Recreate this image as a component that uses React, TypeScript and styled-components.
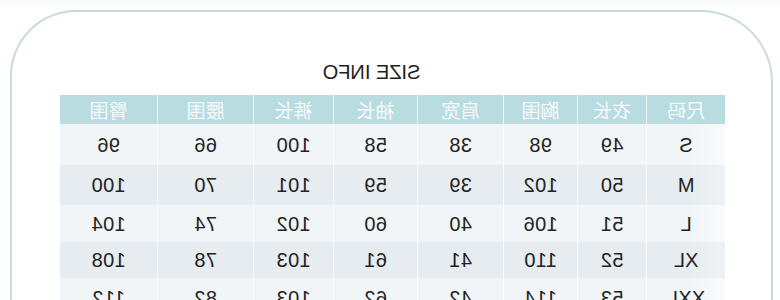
import React from "react";
import styled, { createGlobalStyle } from "styled-components";

const GlobalStyle = createGlobalStyle`
  html, body {
    margin: 0;
    padding: 0;
    background: #ffffff;
    overflow: hidden;
  }
`;

// the reference shot is mirrored left-to-right, so the whole page is flipped
const Page = styled.div`
  width: 780px;
  height: 300px;
  overflow: hidden;
  transform: scaleX(-1);
  background: linear-gradient(to bottom, #f7fafa 0, #ffffff 9px);
  padding-top: 10px;
  box-sizing: border-box;
`;

const Card = styled.div`
  margin-left: 7px;
  width: 763px;
  height: 420px;
  box-sizing: border-box;
  border: 2px solid #c4dddb;
  border-bottom: none;
  border-right-color: #c9dcdb;
  border-left-color: #cfdada;
  border-radius: 72px 66px 0 0;
  background: #ffffff;
  padding-top: 48px;
`;

const Title = styled.h2`
  margin: 0 0 11px;
  padding-left: 40px;
  text-align: center;
  font-family: "Liberation Sans", Arial, sans-serif;
  font-size: 20px;
  font-weight: 400;
  line-height: 24px;
  color: #1e1e1e;
`;

const Table = styled.div`
  margin-left: 46px;
  width: 665px;
  display: grid;
  grid-template-columns: 78px 69px 74px 86px 84px 80px 96px 98px;
`;

const HeadCell = styled.div`
  height: 29px;
  display: flex;
  align-items: center;
  justify-content: center;
  background: #b9dce1;
  border-left: 1px solid rgba(255, 255, 255, 0.75);
  font-family: "Noto Sans CJK SC", "Noto Sans", sans-serif;
  font-size: 19px;
  font-weight: 400;
  color: rgba(255, 255, 255, 0.88);
  &:first-child {
    border-left: none;
  }
`;

const Cell = styled.div<{ $h: number; $shade: boolean; $first: boolean }>`
  height: ${(p) => p.$h}px;
  display: flex;
  align-items: center;
  justify-content: center;
  box-sizing: border-box;
  background: ${(p) =>
    p.$first
      ? p.$shade
        ? "linear-gradient(to right, #eef2f4 0, #e6ecef 40px)"
        : "linear-gradient(to right, #f8fafb 0, #f2f5f8 40px)"
      : p.$shade
      ? "#e6ecef"
      : "#f2f5f8"};
  border-left: ${(p) => (p.$first ? "none" : "1px solid rgba(255,255,255,0.8)")};
  font-family: "Liberation Sans", Arial, sans-serif;
  font-size: 20px;
  letter-spacing: 0.3px;
  color: #222222;
  padding-top: 1px;
`;

const heads = ["尺码", "衣长", "胸围", "肩宽", "袖长", "裤长", "腰围", "臀围"];

const rows: string[][] = [
  ["S", "49", "98", "38", "58", "100", "66", "96"],
  ["M", "50", "102", "39", "59", "101", "70", "100"],
  ["L", "51", "106", "40", "60", "102", "74", "104"],
  ["XL", "52", "110", "41", "61", "103", "78", "108"],
  ["XXL", "53", "114", "42", "62", "103", "82", "112"],
];

const heights = [41, 40, 37, 36, 40];

export default function App() {
  return (
    <>
      <GlobalStyle />
      <Page>
        <Card>
          <Title>SIZE INFO</Title>
          <Table>
            {heads.map((h) => (
              <HeadCell key={h}>{h}</HeadCell>
            ))}
            {rows.map((r, i) =>
              r.map((v, j) => (
                <Cell key={`${i}-${j}`} $h={heights[i]} $shade={i % 2 === 1} $first={j === 0}>
                  {v}
                </Cell>
              ))
            )}
          </Table>
        </Card>
      </Page>
    </>
  );
}
